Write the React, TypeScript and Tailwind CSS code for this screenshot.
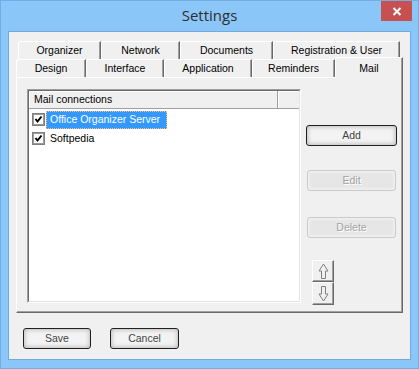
import React from 'react';

const rowTabs1 = [
  { label: 'Organizer', w: 'w-[83px]' },
  { label: 'Network', w: 'w-[79px]' },
  { label: 'Documents', w: 'w-[93px]' },
  { label: 'Registration & User', w: 'w-[127px]' },
];

const rowTabs2 = [
  { label: 'Design', w: 'w-[70px]' },
  { label: 'Interface', w: 'w-[78px]' },
  { label: 'Application', w: 'w-[88px]' },
  { label: 'Reminders', w: 'w-[83px]' },
];

const items = [
  { name: 'Office Organizer Server', selected: true },
  { name: 'Softpedia', selected: false },
];

function Tab({ label, w }: { label: string; w: string }) {
  return (
    <div
      className={`${w} h-full flex items-center justify-center bg-[#f0f0f0] border-t border-l border-white border-r border-r-[#696969] rounded-tl-[3px] shadow-[inset_-1px_0_0_#a0a0a0] text-black`}
    >
      {label}
    </div>
  );
}

function CheckBox() {
  return (
    <svg width="13" height="13" viewBox="0 0 13 13" className="shrink-0">
      <rect x="0.5" y="0.5" width="12" height="12" fill="#fff" stroke="#808080" />
      <rect x="1.5" y="1.5" width="10" height="10" fill="none" stroke="#9a9a9a" />
      <polyline points="3.5,6 5.5,8.5 9.5,3.5" fill="none" stroke="#000" strokeWidth="2" />
    </svg>
  );
}

function Arrow({ down }: { down?: boolean }) {
  return (
    <svg width="11" height="17" viewBox="0 0 11 17" className={down ? 'rotate-180' : ''}>
      <path d="M5.5 1 L10 8 H7.5 V15.5 H3.5 V8 H1 Z" fill="none" stroke="#808080" />
    </svg>
  );
}

function Button({ label, w, disabled }: { label: string; w: string; disabled?: boolean }) {
  if (disabled) {
    return (
      <div
        className={`${w} h-[21px] flex items-center justify-center rounded-[3px] border border-[#cacaca] bg-[#e6e6e6] shadow-[inset_0_0_3px_1px_#f4f4f4] text-[#a3a3a3] [text-shadow:1px_1px_0_#ffffff]`}
      >
        {label}
      </div>
    );
  }
  return (
    <div
      className={`${w} h-[21px] flex items-center justify-center rounded-[3px] border border-[#202020] bg-[#f3f3f3] shadow-[inset_0_0_4px_1px_#bcbcbc] text-[#444]`}
    >
      {label}
    </div>
  );
}

export default function App() {
  return (
    <div
      className="w-[419px] h-[369px] bg-[#8bc6f8] border border-[#72ade6] flex flex-col text-[10.5px]"
      style={{ fontFamily: '"Liberation Sans", Arial, sans-serif' }}
    >
      <div className="relative h-[30px] flex items-center justify-center">
        <span
          className="text-[15px] text-[#2e2e2e] -mt-[2px]"
          style={{ fontFamily: '"Open Sans", "Noto Sans", sans-serif' }}
        >
          Settings
        </span>
        <div className="absolute right-[6px] top-0 w-[31px] h-[20px] bg-[#c75050] flex items-center justify-center">
          <svg width="10" height="9" viewBox="0 0 10 9">
            <path d="M1.5 1 L8.5 8 M8.5 1 L1.5 8" stroke="#fff" strokeWidth="2" />
          </svg>
        </div>
      </div>

      <div className="ml-[7px] w-[403px] h-[329px] bg-[#f0f0f0] border border-[#74a9dc] flex flex-col">
        <div className="pt-[9px] ml-[9px] h-[27px] flex">
          {rowTabs1.map((t) => (
            <Tab key={t.label} label={t.label} w={t.w} />
          ))}
        </div>
        <div className="ml-[7px] h-[18px] flex items-end">
          {rowTabs2.map((t) => (
            <Tab key={t.label} label={t.label} w={t.w} />
          ))}
          <div className="relative z-10 w-[68px] h-[21px] -mb-[1px] flex justify-center pt-[3px] bg-[#f0f0f0] border-t border-l border-white border-r border-r-[#696969] rounded-tl-[3px] shadow-[inset_-1px_0_0_#a0a0a0]">
            Mail
          </div>
        </div>

        <div className="ml-[7px] w-[387px] h-[236px] border-t border-l border-white border-r border-b border-r-[#696969] border-b-[#696969] shadow-[inset_-1px_-1px_0_#a0a0a0] flex pl-[10px] pt-[11px]">
          <div className="w-[274px] h-[214px] border border-t-[#a0a0a0] border-l-[#a0a0a0] border-r-white border-b-white">
            <div className="w-full h-full border border-t-[#696969] border-l-[#696969] border-r-[#e3e3e3] border-b-[#e3e3e3] bg-white flex flex-col">
              <div className="h-[18px] flex bg-[#f0f0f0] border-b border-[#a0a0a0]">
                <div className="w-[249px] flex items-center pl-[5px] border-r border-[#a0a0a0] shadow-[inset_1px_1px_0_#ffffff] text-black">
                  Mail connections
                </div>
                <div className="flex-1 shadow-[inset_1px_1px_0_#ffffff]" />
              </div>
              <div className="pt-[1px]">
                {items.map((it) => (
                  <div key={it.name} className="h-[19px] flex items-center pl-[3px]">
                    <CheckBox />
                    <span
                      className={
                        it.selected
                          ? 'ml-[1px] h-[18px] flex items-center pl-[3px] pr-[6px] bg-[#3399ff] text-white border border-dotted border-[#f5c27a]'
                          : 'ml-[1px] h-[18px] flex items-center pl-[4px] text-black'
                      }
                    >
                      {it.name}
                    </span>
                  </div>
                ))}
              </div>
            </div>
          </div>

          <div className="ml-[5px] flex flex-col">
            <div className="mt-[36px]">
              <Button label="Add" w="w-[91px]" />
            </div>
            <div className="mt-[24px] ml-[1px]">
              <Button label="Edit" w="w-[89px]" disabled />
            </div>
            <div className="mt-[26px] ml-[1px]">
              <Button label="Delete" w="w-[89px]" disabled />
            </div>
            <div className="mt-[22px] ml-[6px] flex flex-col">
              <div className="w-[22px] h-[22px] flex items-center justify-center border border-t-white border-l-white border-r-[#696969] border-b-[#696969] shadow-[inset_-1px_-1px_0_#a0a0a0]">
                <Arrow />
              </div>
              <div className="w-[22px] h-[23px] flex items-center justify-center border border-t-white border-l-white border-r-[#696969] border-b-[#696969] shadow-[inset_-1px_-1px_0_#a0a0a0]">
                <Arrow down />
              </div>
            </div>
          </div>
        </div>

        <div className="mt-[15px] ml-[14px] flex gap-[19px]">
          <Button label="Save" w="w-[68px]" />
          <Button label="Cancel" w="w-[69px]" />
        </div>
      </div>
    </div>
  );
}
